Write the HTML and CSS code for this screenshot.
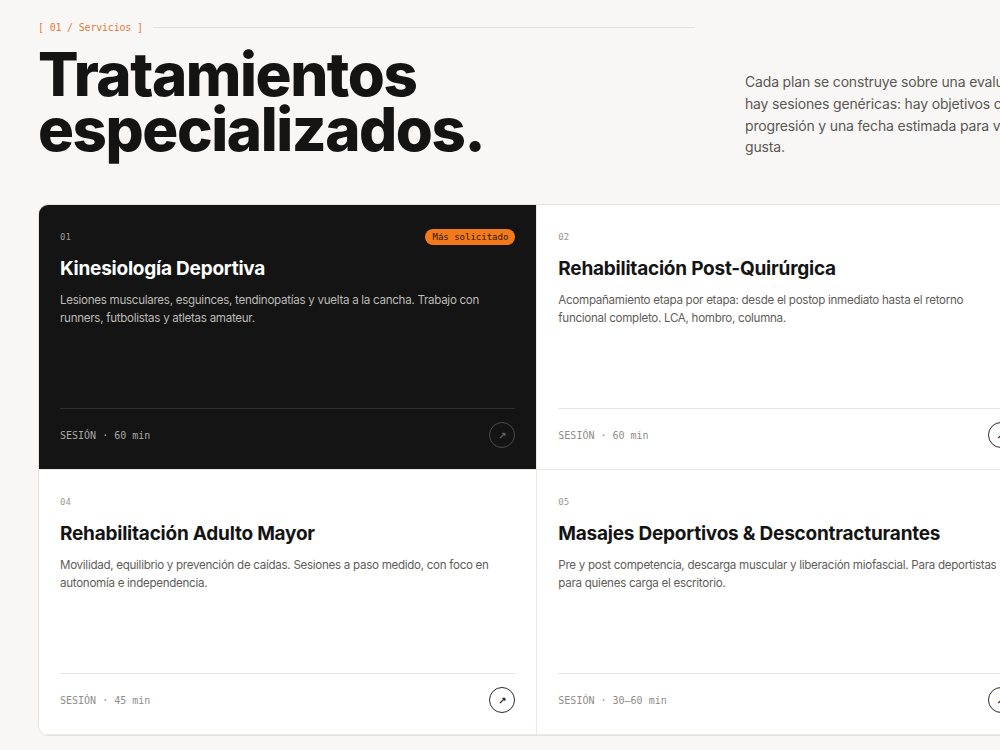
FILE: index.html
```html
<!DOCTYPE html>
<html lang="es">
<head>
  <meta charset="UTF-8">
  <meta name="viewport" content="width=device-width, initial-scale=1">
  <title>Servicios</title>
  <link rel="stylesheet" href="styles.css">
</head>
<body>
  <section class="services">
    <header class="services-head">
      <div class="head-left">
        <div class="eyebrow"><span>[ 01 / Servicios ]</span><i class="rule"></i></div>
        <h1>Tratamientos<br>especializados.</h1>
      </div>
      <p class="intro">Cada plan se construye sobre una evaluación inicial. No hay sesiones genéricas: hay objetivos claros, etapas de progresión y una fecha estimada para volver a lo que te gusta.</p>
    </header>

    <div class="grid">
      <article class="card dark">
        <div class="card-top"><span class="num">01</span><span class="badge">Más solicitado</span></div>
        <h2>Kinesiología Deportiva</h2>
        <p>Lesiones musculares, esguinces, tendinopatías y vuelta a la cancha. Trabajo con runners, futbolistas y atletas amateur.</p>
        <div class="card-foot"><span>SESIÓN · 60 min</span><span class="go">↗</span></div>
      </article>
      <article class="card">
        <div class="card-top"><span class="num">02</span></div>
        <h2>Rehabilitación Post-Quirúrgica</h2>
        <p>Acompañamiento etapa por etapa: desde el postop inmediato hasta el retorno funcional completo. LCA, hombro, columna.</p>
        <div class="card-foot"><span>SESIÓN · 60 min</span><span class="go">↗</span></div>
      </article>
      <article class="card">
        <div class="card-top"><span class="num">03</span></div>
        <h2>Kinesiología Respiratoria</h2>
        <p>Tratamiento para patologías respiratorias agudas y crónicas, en adultos y niños.</p>
        <div class="card-foot"><span>SESIÓN · 45 min</span><span class="go">↗</span></div>
      </article>
      <article class="card">
        <div class="card-top"><span class="num">04</span></div>
        <h2>Rehabilitación Adulto Mayor</h2>
        <p>Movilidad, equilibrio y prevención de caídas. Sesiones a paso medido, con foco en autonomía e independencia.</p>
        <div class="card-foot"><span>SESIÓN · 45 min</span><span class="go">↗</span></div>
      </article>
      <article class="card">
        <div class="card-top"><span class="num">05</span></div>
        <h2>Masajes Deportivos &amp; Descontracturantes</h2>
        <p>Pre y post competencia, descarga muscular y liberación miofascial. Para deportistas y para quienes carga el escritorio.</p>
        <div class="card-foot"><span>SESIÓN · 30–60 min</span><span class="go">↗</span></div>
      </article>
      <article class="card">
        <div class="card-top"><span class="num">06</span></div>
        <h2>Evaluación Funcional</h2>
        <p>Diagnóstico completo de movilidad, fuerza y control motor para definir tu plan.</p>
        <div class="card-foot"><span>SESIÓN · 60 min</span><span class="go">↗</span></div>
      </article>
    </div>
  </section>
</body>
</html>
```

FILE: styles.css
```css
html, body {
  margin: 0;
  overflow: hidden;
}
body {
  background: #f8f7f5;
  color: #141414;
  font-family: Inter, "Noto Sans", sans-serif;
}
.services {
  width: 1497px;
  padding: 22px 38px 0;
}
.services-head {
  display: grid;
  grid-template-columns: 657px 1fr;
  column-gap: 50px;
  align-items: end;
}
.eyebrow {
  display: flex;
  align-items: center;
  gap: 10px;
  font-family: "DejaVu Sans Mono", monospace;
  font-size: 10px;
  letter-spacing: -0.02em;
  color: #e07b3c;
}
.eyebrow .rule {
  flex: 1;
  height: 1px;
  background: #e4e1dc;
}
h1 {
  margin: 14px 0 0;
  font-size: 60px;
  line-height: 55px;
  font-weight: 800;
  letter-spacing: -0.024em;
}
.intro {
  margin: 0 0 -1px;
  width: 372px;
  font-size: 14px;
  line-height: 21.7px;
  letter-spacing: -0.012em;
  color: #5a5854;
}
.grid {
  margin-top: 47px;
  display: grid;
  grid-template-columns: repeat(3, 1fr);
  background: #fff;
  border: 1px solid #e6e3de;
  border-radius: 10px;
  overflow: hidden;
}
.card {
  display: flex;
  flex-direction: column;
  height: 265px;
  box-sizing: border-box;
  padding: 24px 21px 21px;
  border-right: 1px solid #ebe8e4;
  border-bottom: 1px solid #ebe8e4;
}
.card.dark {
  background: #141414;
  color: #fff;
}
.card-top {
  display: flex;
  justify-content: space-between;
  align-items: center;
  height: 16px;
}
.num {
  font-family: "DejaVu Sans Mono", monospace;
  font-size: 9px;
  color: #9a9893;
}
.badge {
  background: #f27a1a;
  color: #2a1606;
  font-family: "DejaVu Sans Mono", monospace;
  font-size: 9px;
  padding: 0 7px;
  line-height: 16px;
  border-radius: 8px;
}
.card h2 {
  margin: 12px 0 0;
  font-size: 19px;
  line-height: 24px;
  font-weight: 700;
  letter-spacing: -0.012em;
}
.card p {
  margin: 10px 0 0;
  font-size: 11.6px;
  line-height: 18px;
  letter-spacing: -0.025em;
  color: #5f5d59;
}
.card.dark p {
  color: #bdbbb6;
}
.card-foot {
  margin-top: auto;
  display: flex;
  justify-content: space-between;
  align-items: center;
  border-top: 1px solid #e8e5e0;
  padding-top: 13px;
  font-family: "DejaVu Sans Mono", monospace;
  font-size: 10px;
  color: #8f8d89;
}
.card.dark .card-foot {
  border-color: #2e2e2e;
  color: #a9a7a3;
}
.go {
  width: 24px;
  height: 24px;
  border: 1px solid #2a2a2a;
  border-radius: 50%;
  display: flex;
  align-items: center;
  justify-content: center;
  font-family: "DejaVu Sans", sans-serif;
  font-size: 10px;
  font-weight: 700;
  color: #222;
}
.card.dark .go {
  border-color: #4a4a4a;
  color: #666;
}
```
